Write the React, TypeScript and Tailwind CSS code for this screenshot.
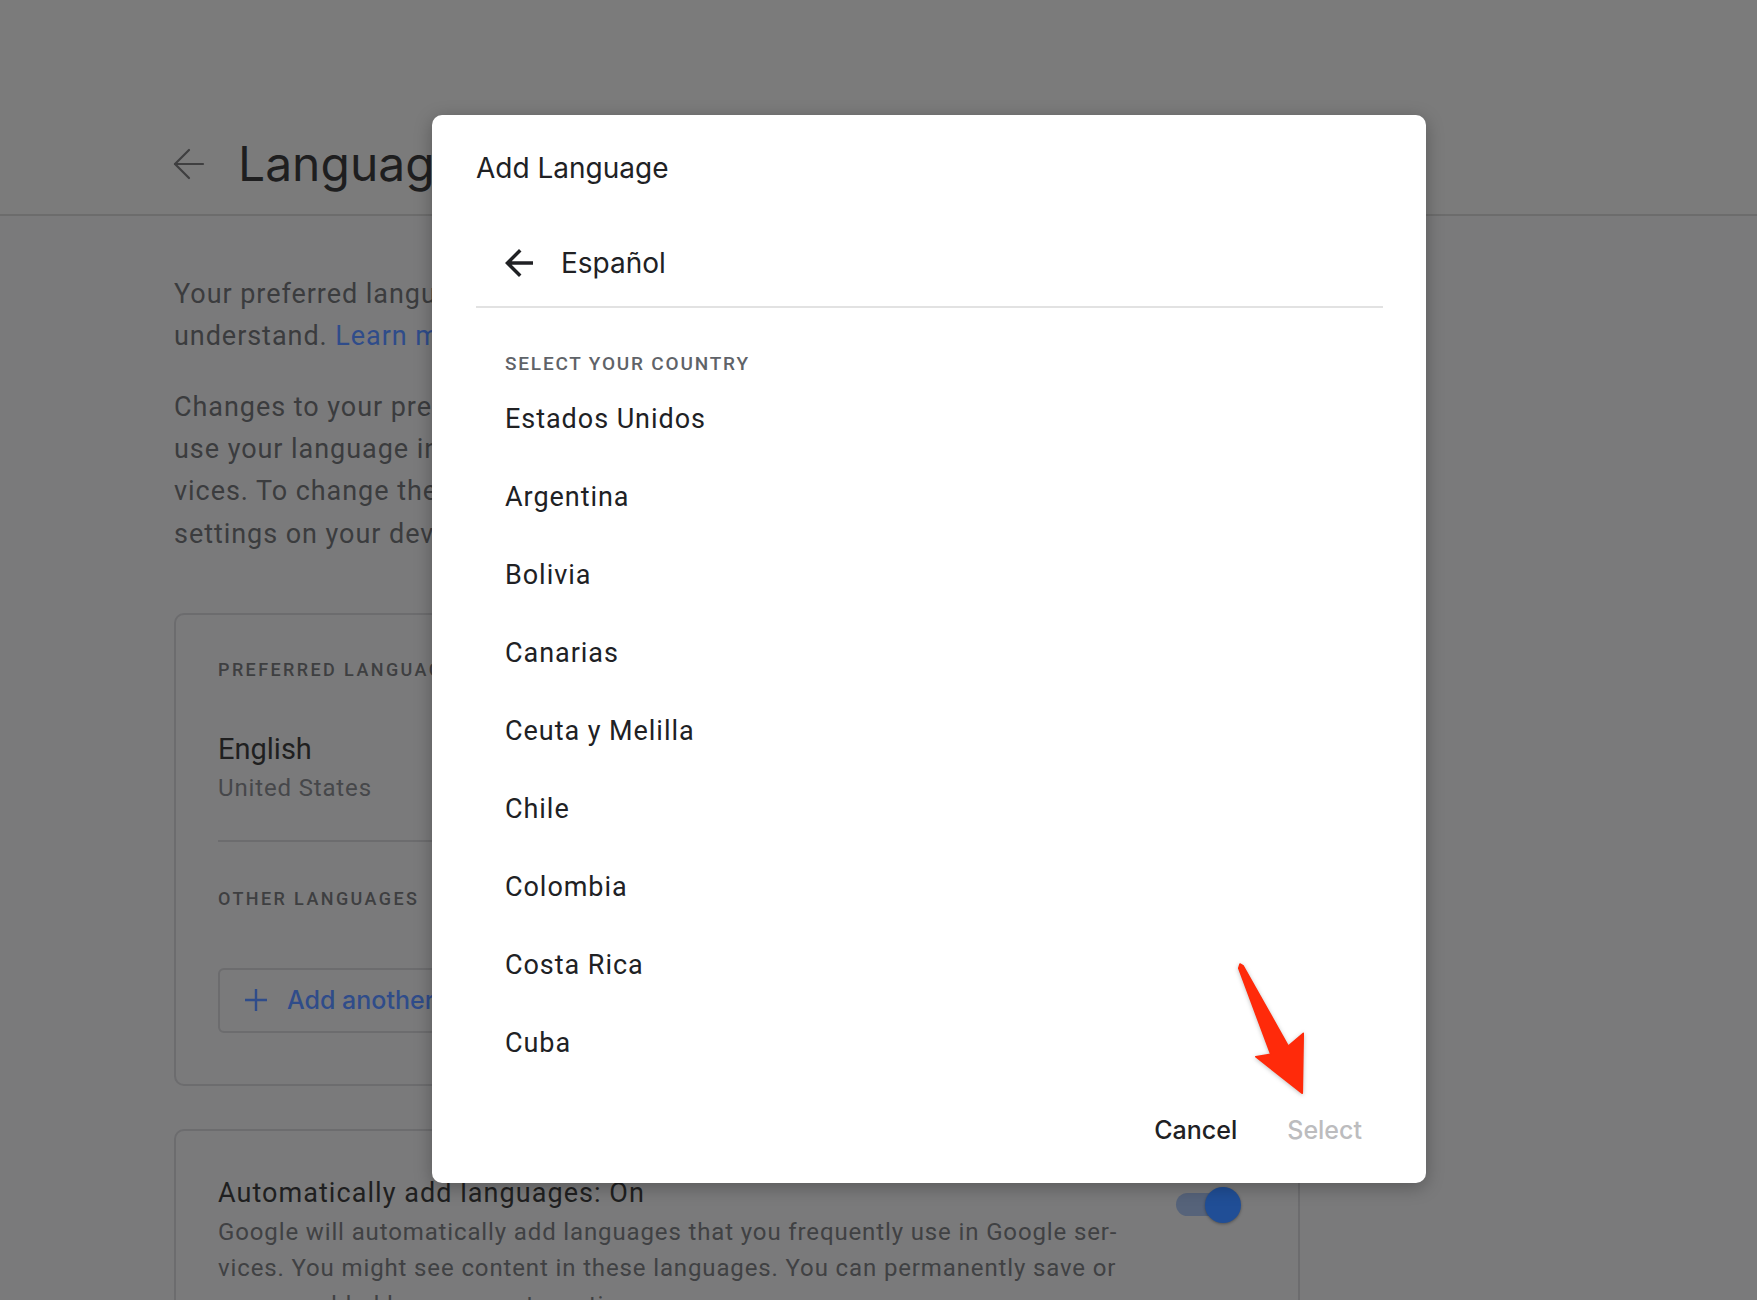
import React from "react";

const countries = [
  "Estados Unidos",
  "Argentina",
  "Bolivia",
  "Canarias",
  "Ceuta y Melilla",
  "Chile",
  "Colombia",
  "Costa Rica",
  "Cuba",
];

function ArrowBack({ className }: { className?: string }) {
  return (
    <svg viewBox="0 0 24 24" className={className} fill="currentColor">
      <path d="M20 11H7.83l5.59-5.59L12 4l-8 8 8 8 1.41-1.41L7.83 13H20v-2z" />
    </svg>
  );
}

export default function App() {
  return (
    <div className="relative w-[1757px] h-[1300px] overflow-hidden bg-[#7a7a7b] font-['Roboto',sans-serif]">
      {/* Header */}
      <header className="h-[216px] pt-[135px] border-b-2 border-[#6c6c6c] bg-[#7b7b7b]">
        <div className="flex items-center h-[58px] pl-[173px]">
          <svg viewBox="0 0 32 32" className="w-[32px] h-[32px] text-[#3f3f40]" fill="none" stroke="currentColor" strokeWidth="2.2" strokeLinecap="round" strokeLinejoin="round">
            <path d="M2 16H30" />
            <path d="M16 2L2 16L16 30" />
          </svg>
          <h1 className="ml-[33px] font-['Inter',sans-serif] text-[48px] leading-[58px] text-[#1e1e1f] whitespace-nowrap">
            Language
          </h1>
        </div>
      </header>

      {/* Main content */}
      <main className="ml-[174px] w-[1126px]">
        <p className="mt-[58px] text-[27px] leading-[41.5px] tracking-[0.95px] text-[#3b3c3e] whitespace-nowrap">
          Your preferred language for Google services and other languages
          <br />
          understand. <span className="text-[#2f4c8a]">Learn more</span>
        </p>
        <p className="mt-[29px] text-[27px] leading-[42.2px] tracking-[0.95px] text-[#3b3c3e] whitespace-nowrap">
          Changes to your preferred language will apply across Google
          <br />
          use your language in other ways, like showing content in Google ser-
          <br />
          vices. To change the language of apps and system
          <br />
          settings on your device, go to your device settings.
        </p>

        {/* Card 1 */}
        <section className="mt-[58px] h-[473px] border-2 border-[#6c6c6e] rounded-[10px] pl-[42px] pr-[42px] pt-[43.5px]">
          <div className="text-[18px] leading-[24px] font-medium tracking-[2.4px] text-[#3e3f41] whitespace-nowrap">
            PREFERRED LANGUAGE
          </div>
          <div className="mt-[48.5px] text-[29px] leading-[36px] text-[#1f1f20]">English</div>
          <div className="mt-[5px] text-[24px] leading-[32px] tracking-[0.85px] text-[#46474a]">United States</div>
          <div className="mt-[36px] h-[2px] bg-[#6c6c6e]" />
          <div className="mt-[45px] text-[18px] leading-[24px] font-medium tracking-[2.4px] text-[#3e3f41] whitespace-nowrap">
            OTHER LANGUAGES
          </div>
          <button className="mt-[57px] h-[65px] flex items-center pl-[25px] pr-[30px] border-2 border-[#6c6c6e] rounded-[6px] text-[#2f4c8a]">
            <svg viewBox="0 0 22 22" className="w-[22px] h-[22px]" fill="none" stroke="currentColor" strokeWidth="2.4">
              <path d="M11 0V22M0 11H22" />
            </svg>
            <span className="ml-[20px] font-['Inter',sans-serif] font-medium text-[25px] leading-[32px] whitespace-nowrap">
              Add another language
            </span>
          </button>
        </section>

        {/* Card 2 */}
        <section className="mt-[43px] h-[320px] border-2 border-[#6c6c6e] rounded-[10px] pl-[42px] pr-[57px] pt-[44px]">
          <div className="flex items-start justify-between">
            <div className="text-[27px] leading-[36px] tracking-[1.05px] text-[#1f1f20] whitespace-nowrap">
              Automatically add languages: On
            </div>
            <div className="relative mt-[12px] -mb-[12px] w-[65px] h-[36px] shrink-0">
              <div className="absolute left-0 top-[6.5px] w-[60px] h-[23px] rounded-full bg-[#56637a]" />
              <div className="absolute right-0 top-0 w-[36px] h-[36px] rounded-full bg-[#204e96] shadow-[0_1px_3px_rgba(0,0,0,0.35)]" />
            </div>
          </div>
          <p className="mt-[3px] text-[24px] leading-[36.5px] tracking-[0.87px] text-[#404143] whitespace-nowrap">
            Google will automatically add languages that you frequently use in Google ser-
            <br />
            vices. You might see content in these languages. You can permanently save or
            <br />
            remove added languages at any time.
          </p>
        </section>
      </main>

      {/* Modal dialog */}
      <div className="absolute left-[432px] top-[115px] w-[994px] h-[1068px] bg-white rounded-[10px] shadow-[0_4px_18px_rgba(0,0,0,0.28)] flex flex-col">
        <div className="pl-[44px] pr-[43px] pt-[36px]">
          <h2 className="font-['Inter',sans-serif] text-[28px] leading-[34px] text-[#202124]">Add Language</h2>
          <div className="mt-[35px] h-[86px] flex items-center pl-[22px]">
            <ArrowBack className="w-[42px] h-[42px] text-[#202124]" />
            <span className="ml-[21px] font-['Inter',sans-serif] text-[28px] leading-[34px] text-[#202124]">Español</span>
          </div>
          <div className="h-[2px] bg-[#e2e2e2]" />
          <div className="pl-[29px]">
            <div className="mt-[43.5px] text-[19px] leading-[24px] font-medium tracking-[1.8px] text-[#5f6368] whitespace-nowrap">
              SELECT YOUR COUNTRY
            </div>
            <ul className="mt-[4px]">
              {countries.map((c) => (
                <li key={c} className="h-[78px] text-[27px] leading-[78px] tracking-[0.95px] text-[#202124]">
                  {c}
                </li>
              ))}
            </ul>
          </div>
        </div>
        <div className="mt-auto flex justify-end pr-[38px] pb-[35px]">
          <button className="pl-[26px] pr-[24px] h-[36px] font-['Inter',sans-serif] font-medium text-[25px] leading-[36px] text-[#202124]">
            Cancel
          </button>
          <button className="px-[26px] h-[36px] font-['Inter',sans-serif] font-medium text-[25px] leading-[36px] text-[#bcbcbe]">
            Select
          </button>
        </div>
      </div>

      {/* Red annotation arrow */}
      <svg
        className="absolute left-[1230px] top-[955px] w-[80px] h-[145px] drop-shadow-[0_1px_2px_rgba(0,0,0,0.25)]"
        viewBox="1230 955 80 145"
      >
        <polygon
          points="1238.7,968.3 1240,964 1243.3,966 1288.3,1046 1303.3,1033.3 1302.3,1093.3 1255.7,1056.7 1270.7,1054.3"
          fill="#ff2a0a"
          stroke="#ff2a0a"
          strokeWidth="1.5"
          strokeLinejoin="round"
        />
      </svg>
    </div>
  );
}
